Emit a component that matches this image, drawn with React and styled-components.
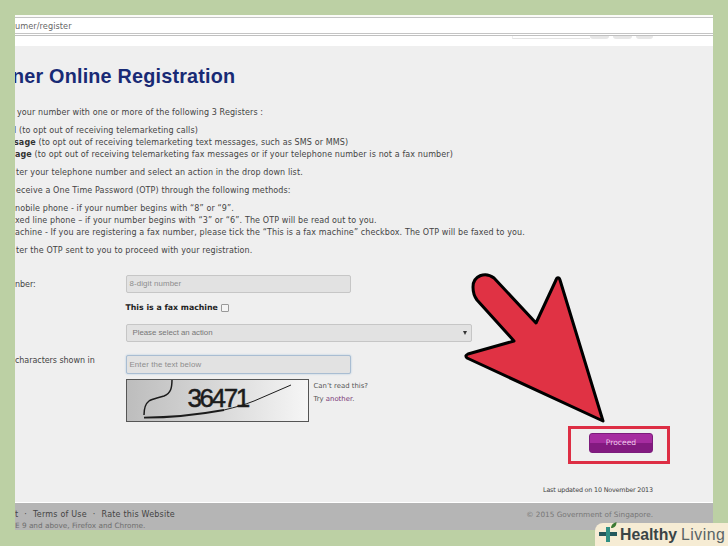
import React from "react";
import styled, { createGlobalStyle } from "styled-components";

const Global = createGlobalStyle`
  html, body { margin: 0; padding: 0; background: #bcd0a4; }
`;
const Page = styled.div`
  position: relative;
  width: 728px;
  height: 546px;
  overflow: hidden;
  background: #bcd0a4;
  font-family: "DejaVu Sans", sans-serif;
  padding: 15px 15px 0;
  box-sizing: border-box;
`;
const Window = styled.div`
  width: 698px;
  display: flex;
  flex-direction: column;
  background: #fff;
  overflow: hidden;
`;
const AddressBar = styled.div`
  padding-top: 2px;
  background: #fbfbf8;
`;
const AddressField = styled.div`
  height: 15px;
  background: #fff;
  border-top: 1px solid #c4c4c4;
  border-bottom: 1px solid #c4c4c4;
  font: 8.2px/16px "DejaVu Sans", sans-serif;
  letter-spacing: 0.05px;
  color: #666;
`;
const ToolStrip = styled.div`
  margin-top: 1px;
  height: 10px;
  background: #fff;
  border-top: 1px solid #c0c0c0;
  display: flex;
  padding-left: 497px;
`;
const ToolSearch = styled.div`
  height: 3px;
  width: 78px;
  background: #fff;
  border-bottom: 1px solid #e2e2e2;
  border-left: 1px solid #eee;
  box-sizing: border-box;
`;
const ToolTab = styled.div`
  height: 3px;
  width: ${(p) => p.$w}px;
  margin-right: ${(p) => p.$m}px;
  background: #e6e6e6;
  border-radius: 0 0 4px 4px;
`;
const Content = styled.main`
  height: 457px;
  background: #efefef;
  position: relative;
  box-sizing: border-box;
  padding-top: 18px;
  border-bottom: 1px solid #fff;
  overflow: hidden;
`;
const Title = styled.h1`
  margin: 0 0 0 -3px;
  font: bold 19.8px/24px "Liberation Sans", sans-serif;
  letter-spacing: 0.2px;
  color: #182a75;
  white-space: nowrap;
`;
const Body = styled.div`
  margin-top: 19px;
  font: 8px/12px "DejaVu Sans", sans-serif;
  letter-spacing: 0.11px;
  color: #444;
`;
const Para = styled.p`
  margin: 0 0 6px ${(p) => p.$x || 0}px;
  white-space: nowrap;
`;
const Line = styled.div`
  margin-left: ${(p) => p.$x || 0}px;
  white-space: nowrap;
`;
const Group = styled.div`
  margin-bottom: 6px;
`;
const Bold = styled.b`
  color: #333;
`;
const Form = styled.div`
  margin-top: 18px;
  display: grid;
  grid-template-columns: 110.5px 345px 1fr;
  font: 8px/12px "DejaVu Sans", sans-serif;
  color: #444;
`;
const Label = styled.div`
  white-space: nowrap;
  padding-top: 3px;
  letter-spacing: -0.05px;
  margin-top: ${(p) => p.$top || 0}px;
`;
const Field = styled.div`
  box-sizing: border-box;
  height: ${(p) => p.$h || 18}px;
  width: ${(p) => p.$w}px;
  margin-top: ${(p) => p.$top || 0}px;
  background: #e2e2e2;
  border: 1px solid ${(p) => (p.$focus ? "#a9bdd2" : "#c6c6c6")};
  box-shadow: ${(p) => (p.$focus ? "0 0 2px #a8c4dd" : "none")};
  border-radius: 2px;
  padding-left: ${(p) => p.$pad || 3}px;
  font: 7.9px/16px "Liberation Sans", sans-serif;
  letter-spacing: ${(p) => p.$ls || 0.1}px;
  color: ${(p) => p.$color || "#8d8d8d"};
  display: flex;
  justify-content: space-between;
  align-items: center;
  white-space: nowrap;
`;
const Caret = styled.span`
  border-left: 2px solid transparent;
  border-right: 2px solid transparent;
  border-top: 4px solid #333;
  margin-right: 4px;
`;
const FaxRow = styled.div`
  display: flex;
  align-items: center;
  gap: 3px;
  height: 14px;
  margin-top: 8px;
  font: bold 7.8px/14px "DejaVu Sans", sans-serif;
  color: #222;
`;
const Check = styled.span`
  width: 6px;
  height: 6px;
  border: 1px solid #999;
  border-radius: 1px;
  background: #f4f4f4;
`;
const CaptchaRow = styled.div`
  display: flex;
  align-items: flex-start;
  gap: 5px;
  margin-top: 5px;
`;
const CaptchaBox = styled.div`
  box-sizing: border-box;
  width: 183px;
  height: 43px;
  border: 1px solid #555;
  background: linear-gradient(90deg, #bdbdbd 0%, #d8d8d8 50%, #f6f6f6 100%);
  position: relative;
  overflow: hidden;
`;
const CaptchaText = styled.span`
  position: absolute;
  left: 61px;
  top: -2px;
  font: 26px/40px "Liberation Sans", sans-serif;
  letter-spacing: -2.4px;
  color: #1c1c1c;
  -webkit-text-stroke: 0.5px #1c1c1c;
`;
const CaptchaLines = styled.svg`
  position: absolute;
  left: -1px;
  top: -1px;
`;
const Help = styled.div`
  font: 6.9px/13px "DejaVu Sans", sans-serif;
  color: #555;
  padding-top: 1px;
  white-space: nowrap;
`;
const HelpLink = styled.span`
  color: #7a3a78;
`;
const Proceed = styled.button`
  position: absolute;
  left: 574px;
  top: 387px;
  width: 64px;
  height: 20px;
  border: 1px solid #7c1c7c;
  border-radius: 3px;
  padding: 0;
  background: linear-gradient(180deg, #a62ca0 0%, #a62ca0 50%, #831a80 52%, #831a80 100%);
  color: #eec9ea;
  font: 7.6px/18px "DejaVu Sans", sans-serif;
`;
const LastUpdated = styled.div`
  position: absolute;
  left: 528px;
  top: 439px;
  font: 6.4px/10px "DejaVu Sans", sans-serif;
  letter-spacing: -0.18px;
  color: #444;
  white-space: nowrap;
`;
const Footer = styled.footer`
  height: 27px;
  box-sizing: border-box;
  background: #b5b5b5;
  display: flex;
  justify-content: space-between;
  padding: 6px 60px 0 0;
  white-space: nowrap;
`;
const FooterLeft = styled.div`
  font: 8px/11px "DejaVu Sans", sans-serif;
  letter-spacing: 0.2px;
  color: #444;
`;
const FooterSep = styled.span`
  margin: 0 6px;
`;
const FooterSmall = styled.div`
  font: 7.3px/12px "DejaVu Sans", sans-serif;
  color: #6e6e6e;
`;
const FooterRight = styled.div`
  font: 7.3px/11px "DejaVu Sans", sans-serif;
  color: #777;
`;
const Overlay = styled.svg`
  position: absolute;
  left: 0;
  top: 0;
  pointer-events: none;
`;
const Badge = styled.div`
  position: absolute;
  left: 595px;
  top: 523px;
  width: 133px;
  height: 23px;
  background: #f6ecd4;
  border-radius: 8px 0 0 0;
  display: flex;
  align-items: center;
  padding-left: 3px;
  box-sizing: border-box;
  font: 15.8px/23px "Liberation Sans", sans-serif;
  color: #3a4446;
`;
const BadgeIcon = styled.svg`
  flex: none;
  margin: -3px 2px 0 0;
  overflow: visible;
`;
const Strong = styled.b`
  font-weight: 700;
  margin-right: 4px;
`;
const Thin = styled.span`
  color: #5a6466;
  letter-spacing: 0.5px;
`;

export default function App() {
  return (
    <Page>
      <Global />
      <Window>
        <AddressBar>
          <AddressField>umer/register</AddressField>
        </AddressBar>
        <ToolStrip>
          <ToolSearch />
          <ToolTab $w={19} $m={4} />
          <ToolTab $w={19} $m={4} />
          <ToolTab $w={17} $m={0} />
        </ToolStrip>
        <Content>
          <Title>ner Online Registration</Title>
          <Body>
            <Para $x={2}>your number with one or more of the following 3 Registers :</Para>
            <Group>
              <Line $x={-1}>l (to opt out of receiving telemarketing calls)</Line>
              <Line $x={-1}><Bold>sage</Bold> (to opt out of receiving telemarketing text messages, such as SMS or MMS)</Line>
              <Line $x={0}><Bold>age</Bold> (to opt out of receiving telemarketing fax messages or if your telephone number is not a fax number)</Line>
            </Group>
            <Para $x={1}>ter your telephone number and select an action in the drop down list.</Para>
            <Para $x={1}>eceive a One Time Password (OTP) through the following methods:</Para>
            <Group>
              <Line $x={0}>nobile phone - if your number begins with “8” or “9”.</Line>
              <Line $x={0}>xed line phone – if your number begins with “3” or “6”. The OTP will be read out to you.</Line>
              <Line $x={0}>achine - If you are registering a fax number, please tick the “This is a fax machine” checkbox. The OTP will be faxed to you.</Line>
            </Group>
            <Para $x={1}>ter the OTP sent to you to proceed with your registration.</Para>
          </Body>
          <Form>
            <Label $top={1}>nber:</Label>
            <Field $w={225}>8-digit number</Field>
            <div />
            <div />
            <FaxRow>This is a fax machine <Check /></FaxRow>
            <div />
            <div />
            <Field $w={346} $pad={6} $top={9} $color="#777" $ls={-0.05}>Please select an action<Caret /></Field>
            <div />
            <Label $top={10}>characters shown in</Label>
            <Field $w={225} $top={13} $h={19} $focus>Enter the text below</Field>
            <div />
            <div />
            <CaptchaRow>
              <CaptchaBox>
                <CaptchaText>36471</CaptchaText>
                <CaptchaLines width="183" height="43" viewBox="0 0 183 43" fill="none" stroke="#1c1c1c">
                  <path d="M46 0 C46 9 45 14 38 17 C32 19 26 20 23 22 C19 25 18 29 18 36" strokeWidth="1.5" />
                  <path d="M18 38.6 C40 38.6 65 37 98 31" strokeWidth="1.8" />
                  <path d="M98 31 C110 28 118 26 128 22 L165 6" strokeWidth="1" />
                </CaptchaLines>
              </CaptchaBox>
              <Help>
                <div>Can’t read this?</div>
                <div>Try <HelpLink>another</HelpLink>.</div>
              </Help>
            </CaptchaRow>
          </Form>
          <Proceed>Proceed</Proceed>
          <LastUpdated>Last updated on 10 November 2013</LastUpdated>
        </Content>
        <Footer>
          <div>
            <FooterLeft>t<FooterSep>·</FooterSep>Terms of Use<FooterSep>·</FooterSep>Rate this Website</FooterLeft>
            <FooterSmall>E 9 and above, Firefox and Chrome.</FooterSmall>
          </div>
          <FooterRight>© 2015 Government of Singapore.</FooterRight>
        </Footer>
      </Window>
      <Overlay width="728" height="546" viewBox="0 0 728 546">
        <path
          d="M473 287 C473 276 485 271 494 278 L536 323 L556 280 C557 277 559 277 560 280 L603 421 L467 358 C465 356 466 355 468 354 L514 341 L477 300 C474 296 473 292 473 287 Z"
          fill="#e03244"
          stroke="#000"
          strokeWidth="3"
          strokeLinejoin="round"
        />
        <rect x="569.5" y="427.5" width="99" height="35" fill="none" stroke="#dd2e44" strokeWidth="3" />
      </Overlay>
      <Badge>
        <BadgeIcon width="20" height="18" viewBox="0 0 20 18">
          <path d="M1 8 H19 V12 H1 Z" fill="#24585c" />
          <path d="M8 3 H12 V18 H8 Z" fill="#2f8f84" />
          <path d="M13 4 C13 1 15 -1 18.5 -2 C18.5 1.5 17 4 13 4 Z" fill="#3c7a34" />
        </BadgeIcon>
        <Strong>Healthy</Strong><Thin>Living</Thin>
      </Badge>
    </Page>
  );
}
